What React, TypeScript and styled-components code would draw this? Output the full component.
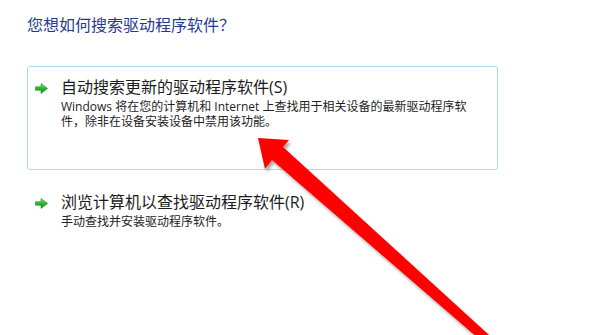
import React from "react";
import styled, { createGlobalStyle } from "styled-components";

const GlobalStyle = createGlobalStyle`
  html, body {
    margin: 0;
    padding: 0;
    background: #ffffff;
  }
  body {
    font-family: "Open Sans", "Noto Sans CJK SC", sans-serif;
    overflow: hidden;
  }
`;

const Page = styled.div`
  position: relative;
  width: 594px;
  height: 335px;
  padding: 13px 0 0 27px;
  box-sizing: border-box;
  background: #ffffff;
  overflow: hidden;
`;

const Heading = styled.h1`
  margin: 0 0 31px 0;
  font-family: "Noto Sans CJK SC", sans-serif;
  font-weight: 400;
  font-size: 16px;
  line-height: 22px;
  color: #1f3a8f;
`;

const OptionList = styled.div`
  display: flex;
  flex-direction: column;
  gap: 11px;
  width: 471px;
`;

const OptionCard = styled.div<{ $active?: boolean }>`
  display: grid;
  grid-template-columns: 13px 1fr;
  column-gap: 13px;
  align-items: start;
  box-sizing: border-box;
  min-height: ${(p) => (p.$active ? "104px" : "auto")};
  padding: 10px 18px 10px 7px;
  border: 1px solid ${(p) => (p.$active ? "#a9dce8" : "transparent")};
  border-radius: 3px;
  background: #ffffff;
`;

const IconCell = styled.div`
  height: 22px;
  display: flex;
  align-items: center;
`;

const TextCol = styled.div`
  display: flex;
  flex-direction: column;
`;

const Title = styled.div`
  font-family: "Open Sans", "Noto Sans CJK SC", sans-serif;
  font-size: 16px;
  line-height: 21px;
  margin-bottom: 1px;
  color: #1b1b1b;
  white-space: nowrap;
`;

const Desc = styled.div`
  font-family: "Open Sans", "Noto Sans CJK SC", sans-serif;
  font-size: 12px;
  line-height: 15px;
  color: #222222;
  white-space: nowrap;
`;

const Overlay = styled.svg`
  position: absolute;
  left: 0;
  top: 0;
  width: 594px;
  height: 335px;
  pointer-events: none;
`;

const GreenArrow = () => (
  <svg width="13" height="11" viewBox="0 0 13 11">
    <defs>
      <linearGradient id="ga" x1="0" y1="0" x2="0" y2="1">
        <stop offset="0" stopColor="#7ee07a" />
        <stop offset="0.5" stopColor="#2fb52f" />
        <stop offset="1" stopColor="#138a1c" />
      </linearGradient>
    </defs>
    <path
      d="M0.5 3.8 H6 V0.6 L12.6 5.5 L6 10.4 V7.2 H0.5 Z"
      fill="url(#ga)"
      stroke="#1a8a22"
      strokeWidth="0.6"
      strokeLinejoin="round"
    />
  </svg>
);

type Opt = { title: string; lines: string[]; active?: boolean };

const options: Opt[] = [
  {
    title: "自动搜索更新的驱动程序软件(S)",
    lines: [
      "Windows 将在您的计算机和 Internet 上查找用于相关设备的最新驱动程序软",
      "件，除非在设备安装设备中禁用该功能。",
    ],
    active: true,
  },
  {
    title: "浏览计算机以查找驱动程序软件(R)",
    lines: ["手动查找并安装驱动程序软件。"],
  },
];

export default function App() {
  return (
    <>
      <GlobalStyle />
      <Page>
        <Heading>您想如何搜索驱动程序软件？</Heading>
        <OptionList>
          {options.map((o) => (
            <OptionCard key={o.title} $active={o.active}>
              <IconCell>
                <GreenArrow />
              </IconCell>
              <TextCol>
                <Title>{o.title}</Title>
                {o.lines.map((l) => (
                  <Desc key={l}>{l}</Desc>
                ))}
              </TextCol>
            </OptionCard>
          ))}
        </OptionList>
        <Overlay viewBox="0 0 594 335">
          <defs>
            <filter id="sh" x="-10%" y="-10%" width="130%" height="130%">
              <feDropShadow dx="2" dy="3" stdDeviation="1.5" floodColor="#000" floodOpacity="0.35" />
            </filter>
          </defs>
          <polygon
            points="258,138 289,140 283,147 500,345 486,345 272,160 265,169"
            fill="#ff0000"
            filter="url(#sh)"
          />
        </Overlay>
      </Page>
    </>
  );
}
